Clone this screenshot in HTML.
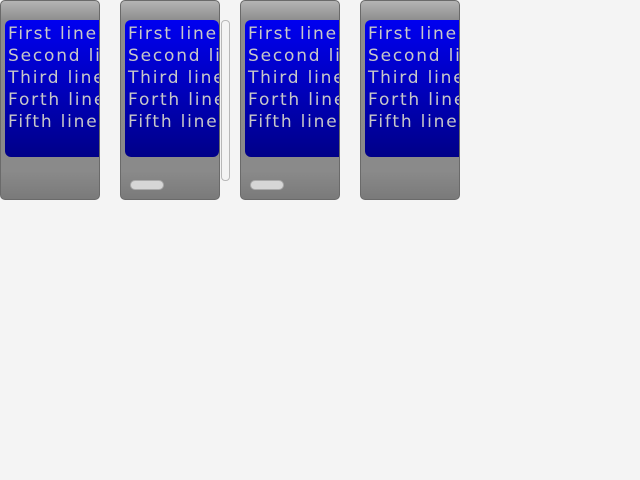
<!DOCTYPE html>
<html><head><style>
body{margin:0;width:640px;height:480px;background:#f4f4f4;position:relative;overflow:hidden}
.p{position:absolute;top:0;width:98px;height:198px;border:1px solid #6a6a6a;border-radius:5px;background:linear-gradient(#b4b4b4 0px,#8c8c8c 20px,#8a8a8a 170px,#7a7a7a 198px);overflow:hidden}
.b{position:absolute;left:4px;top:19px;width:110px;height:137px;border-radius:6px;background:linear-gradient(#0000f0,#000088);overflow:hidden}
.b div{font-family:"DejaVu Sans",sans-serif;font-size:17px;letter-spacing:1.8px;color:#c8c8c8;line-height:22px;padding:3px 0 0 3px;white-space:nowrap}
.h{position:absolute;left:9px;top:179px;width:32px;height:8px;border-radius:5px;background:#d6d6d6;border:1px solid #aaa}
.v{position:absolute;left:221px;top:20px;width:7px;height:159px;border:1px solid #b8b8b8;border-radius:4px;background:#f4f4f4}
</style></head><body>
<div class="p" style="left:0"><div class="b"><div>First line<br>Second line<br>Third line<br>Forth line<br>Fifth line</div></div></div>
<div class="p" style="left:120px"><div class="b" style="width:94px"><div>First line<br>Second line<br>Third line<br>Forth line<br>Fifth line</div></div><div class="h"></div></div>
<div class="v"></div>
<div class="p" style="left:240px"><div class="b"><div>First line<br>Second line<br>Third line<br>Forth line<br>Fifth line</div></div><div class="h"></div></div>
<div class="p" style="left:360px"><div class="b"><div>First line<br>Second line<br>Third line<br>Forth line<br>Fifth line</div></div></div>
</body></html>
